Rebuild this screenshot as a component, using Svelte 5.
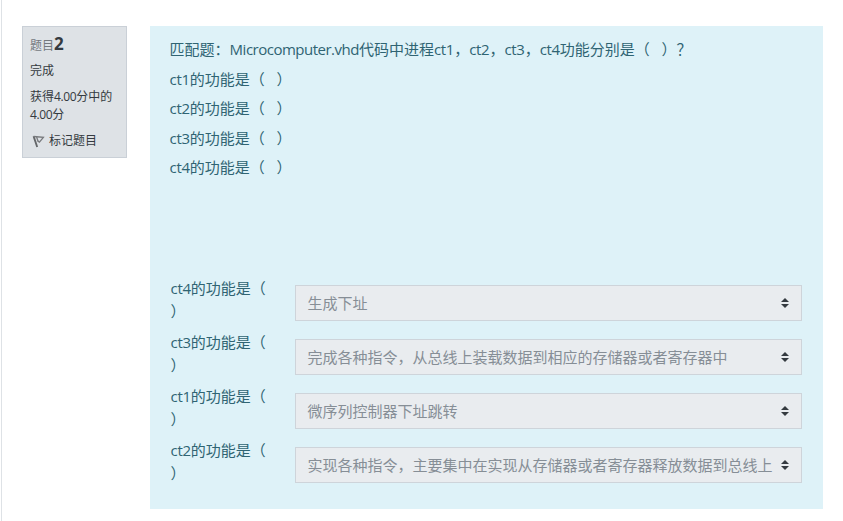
<script>
  const prompts = ['ct1', 'ct2', 'ct3', 'ct4'];
  const answers = [
    ['ct4', '生成下址'],
    ['ct3', '完成各种指令，从总线上装载数据到相应的存储器或者寄存器中'],
    ['ct1', '微序列控制器下址跳转'],
    ['ct2', '实现各种指令，主要集中在实现从存储器或者寄存器释放数据到总线上']
  ];
  const gap = '\u00a0\u00a0\u00a0';
</script>

<main>
  <aside class="info">
    <h3>题目<b>2</b></h3>
    <div class="state">完成</div>
    <div class="grade">获得<span class="num">4.00</span>分中的<br /><span class="num">4.00</span>分</div>
    <div class="flag">
      <svg width="13" height="13" viewBox="0 0 13 13" fill="none">
        <path d="M1.6 1.2 5.2 12" stroke="#646669" stroke-width="1.9" />
        <path d="M1.6 1.5 11.4 2.3 7.4 7.1 5.5 5.9" stroke="#77797c" stroke-width="1.3" />
        <path d="M4.6 2 6 6" stroke="#77797c" stroke-width="1.3" />
      </svg>
      <span>标记题目</span>
    </div>
  </aside>
  <section class="question">
    <div class="text">
      <p>匹配题：<span class="name">Microcomputer.vhd</span>代码中进程{#each prompts as p, i}<span class="ct">{p}</span>{i < 3 ? '，' : ''}{/each}功能分别是（{gap}）？</p>
      {#each prompts as p}
        <p><span class="ct">{p}</span>的功能是（{gap}）</p>
      {/each}
    </div>
    <div class="answers">
      {#each answers as [name, choice]}
        <div class="row">
          <div class="label"><span class="ct">{name}</span>的功能是（<br />）</div>
          <div class="select">
            <span>{choice}</span>
            <svg width="8" height="10" viewBox="0 0 8 10" fill="#343a40"><path d="M0 4 4 0 8 4ZM0 6 4 10 8 6Z" /></svg>
          </div>
        </div>
      {/each}
    </div>
  </section>
</main>

<style>
  :global(body) { background: #fff; }
  main {
    box-sizing: border-box;
    width: 843px;
    height: 521px;
    overflow: hidden;
    border-left: 1px solid #fff;
    box-shadow: inset 1px 0 #dee2e6;
    padding: 26px 20px 0 21px;
    display: flex;
    align-items: flex-start;
    gap: 23px;
    font: 15px/22.5px "Open Sans", "Noto Sans CJK SC", sans-serif;
  }
  .info {
    box-sizing: border-box;
    flex: none;
    width: 105px;
    height: 132px;
    padding: 6px 7px;
    background: #dee2e6;
    border: 1px solid #cad0d7;
    color: #343a40;
    font-size: 12px;
    line-height: 18px;
    white-space: nowrap;
  }
  h3 { margin: 0; font-size: 12px; font-weight: 400; line-height: 22px; height: 22px; color: #74797e; }
  h3 b { font-size: 17px; font-weight: 700; color: #343a40; }
  .state { margin-top: 7px; }
  .grade { margin-top: 8px; }
  .num { letter-spacing: -0.35px; }
  .flag { margin-top: 8px; display: flex; align-items: center; }
  .flag svg { margin: 1px 4px 0 2px; }
  .question {
    box-sizing: border-box;
    flex: none;
    width: 673px;
    height: 483px;
    padding: 12px 21px 0 19.6px;
    background: #def2f8;
    color: #2f6473;
    white-space: nowrap;
  }
  .text { height: 239px; }
  p { margin: 0 0 7px; }
  .name { letter-spacing: -0.5px; }
  .ct { letter-spacing: -0.3px; }
  .row { display: flex; height: 54px; }
  .label { width: 125.4px; padding-left: 1px; box-sizing: border-box; flex: none; }
  .select {
    box-sizing: border-box;
    flex: 1;
    height: 36px;
    margin-top: 8px;
    padding: 0 12px 0 11.5px;
    display: flex;
    align-items: center;
    justify-content: space-between;
    background: #e9ecef;
    border: 1px solid #ced4da;
    color: #868e96;
  }
</style>
